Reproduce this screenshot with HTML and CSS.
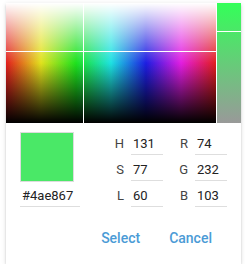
FILE: index.html
```html
<!DOCTYPE html>
<html>
<head>
<meta charset="utf-8">
<link rel="stylesheet" href="styles.css">
</head>
<body>
<div class="card">
  <div class="pickers">
    <div class="spectrum">
      <div class="cross-v"></div>
      <div class="cross-h"></div>
    </div>
    <div class="sat">
      <div class="sat-line"></div>
    </div>
  </div>
  <div class="details">
    <div class="left">
      <div class="swatch"></div>
      <div class="field hex">#4ae867</div>
    </div>
    <div class="grid">
      <span class="lbl">H</span><div class="field num">131</div>
      <span class="lbl">R</span><div class="field num">74</div>
      <span class="lbl">S</span><div class="field num">77</div>
      <span class="lbl">G</span><div class="field num">232</div>
      <span class="lbl">L</span><div class="field num">60</div>
      <span class="lbl">B</span><div class="field num">103</div>
    </div>
  </div>
  <div class="actions">
    <button class="btn">Select</button>
    <button class="btn">Cancel</button>
  </div>
</div>
</body>
</html>
```
FILE: styles.css
```css
html, body {
  margin: 0;
  padding: 0;
  background: #fff;
}
body {
  font-family: Roboto, "Liberation Sans", sans-serif;
}
.card {
  margin: 3px 0 0 6px;
  width: 235px;
  height: 261px;
  background: #fff;
  box-shadow: 0 3px 1px -2px rgba(0,0,0,.2), 0 2px 2px 0 rgba(0,0,0,.14), 0 1px 5px 0 rgba(0,0,0,.12);
}
.pickers {
  display: flex;
  gap: 1px;
  height: 120px;
}
.spectrum {
  position: relative;
  width: 210px;
  height: 120px;
  background:
    linear-gradient(to bottom, #fff 0%, rgba(255,255,255,0) 50%, rgba(0,0,0,0) 50%, #000 100%),
    linear-gradient(to right,
      hsl(0,77%,50%), hsl(60,77%,50%), hsl(120,77%,50%),
      hsl(180,77%,50%), hsl(240,77%,50%), hsl(300,77%,50%), hsl(360,77%,50%));
}
.cross-v {
  position: absolute;
  left: 77px;
  top: 0;
  bottom: 0;
  width: 1px;
  background: #fff;
}
.cross-h {
  position: absolute;
  top: 48px;
  left: 0;
  right: 0;
  height: 1px;
  background: #fff;
}
.sat {
  position: relative;
  width: 24px;
  height: 120px;
  background: linear-gradient(to bottom, hsl(131,100%,60%), hsl(131,0%,60%));
}
.sat-line {
  position: absolute;
  top: 28px;
  left: 0;
  right: 0;
  height: 1px;
  background: #fff;
}
.details {
  display: flex;
  padding: 6px 0 0 14px;
}
.left {
  width: 60px;
  padding-top: 3px;
}
.swatch {
  width: 52px;
  height: 48px;
  background: #4ae867;
  border: 1px solid #dcdcdc;
}
.field {
  height: 21px;
  padding-top: 4px;
  border-bottom: 1px solid #dedede;
  font-size: 13px;
  line-height: 16px;
  color: #222;
  display: flex;
  align-items: center;
  padding-left: 2px;
}
.hex {
  height: 21px;
  padding-top: 3px;
}
.grid {
  display: grid;
  grid-template-columns: 16px 32px 32px 32px;
  grid-auto-rows: 26px;
  margin-left: 35px;
}
.lbl {
  font-size: 13px;
  color: #444;
  display: flex;
  align-items: center;
  justify-content: flex-end;
  padding-right: 7px;
  height: 21px;
  padding-top: 4px;
}
.num {
  padding-left: 2px;
}
.actions {
  display: flex;
  justify-content: flex-end;
  padding: 19px 15px 0 0;
}
.btn {
  font-family: Roboto, "Liberation Sans", sans-serif;
  font-size: 14px;
  font-weight: 500;
  color: #4b9bd6;
  background: none;
  border: none;
  padding: 0 14px;
  height: 24px;
  margin-left: 1px;
  cursor: pointer;
}
```
